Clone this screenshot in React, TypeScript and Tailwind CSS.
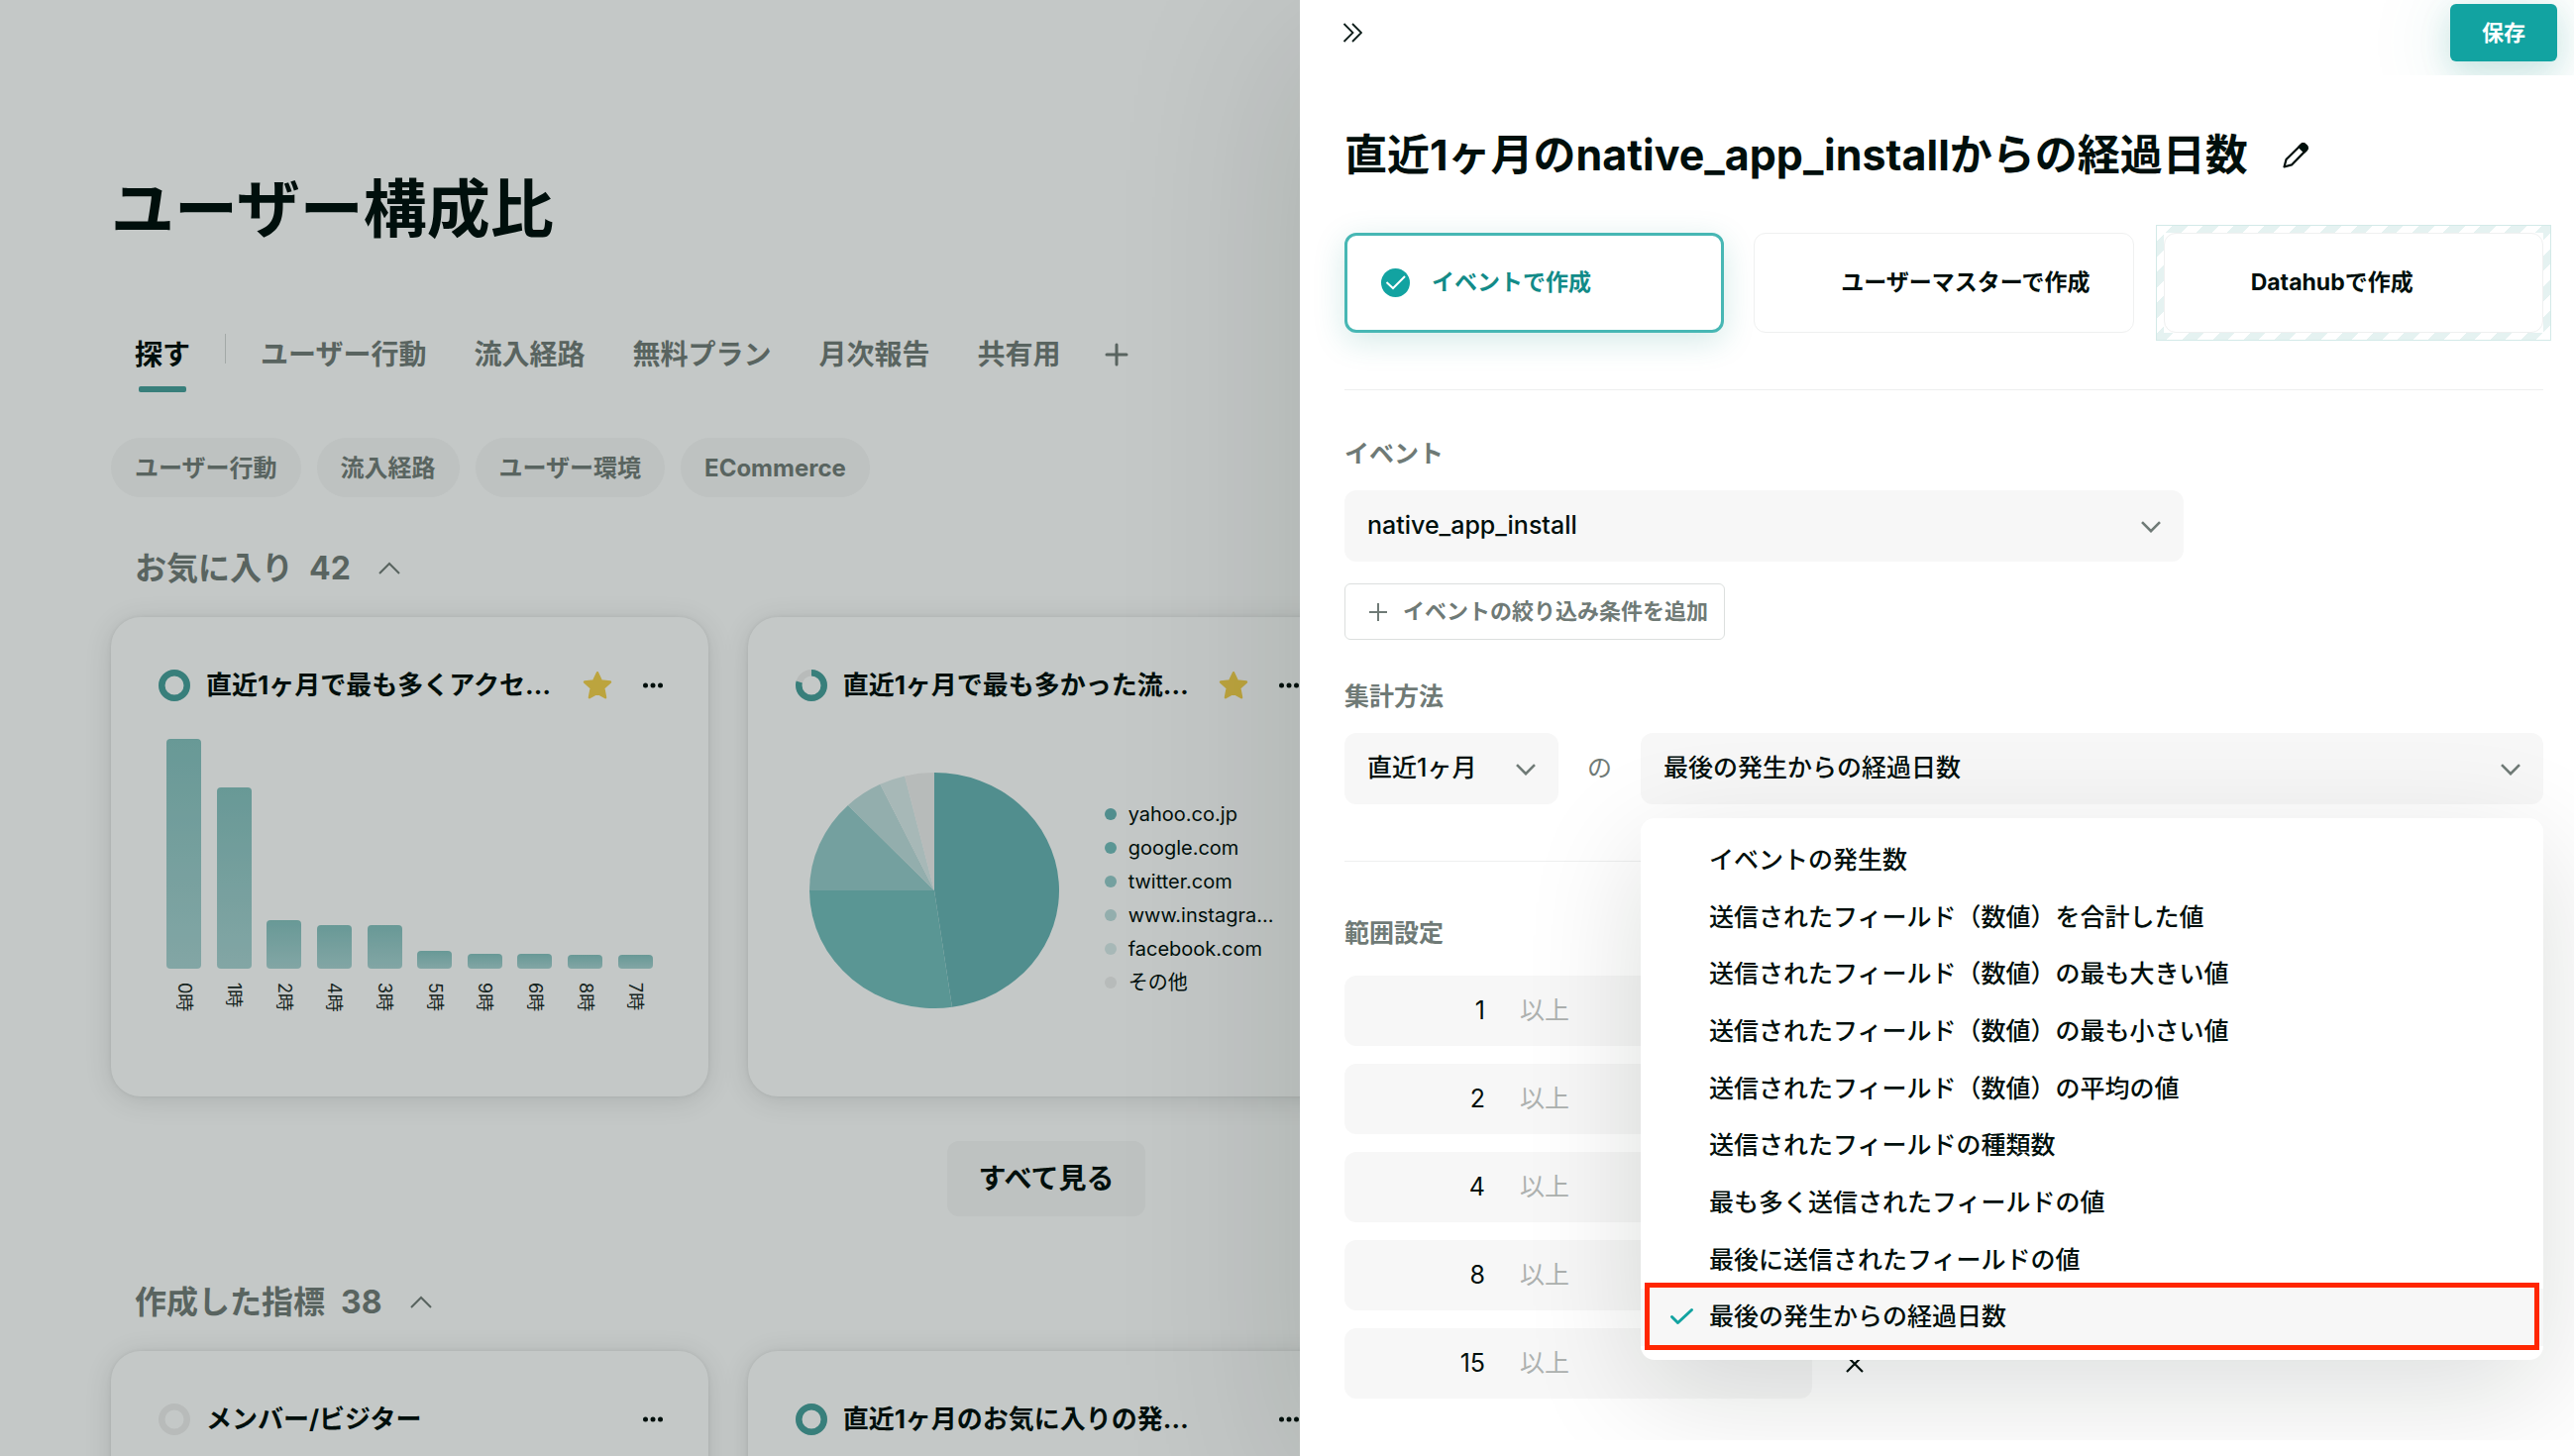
import { useState } from "react";
import type { ReactNode } from "react";
import clsx from "clsx";

const TABS = ["ユーザー行動", "流入経路", "無料プラン", "月次報告", "共有用"];
const CHIPS = ["ユーザー行動", "流入経路", "ユーザー環境", "ECommerce"];

const HOURS = [
  { label: "0時", height: 232 },
  { label: "1時", height: 183 },
  { label: "2時", height: 49 },
  { label: "4時", height: 44 },
  { label: "3時", height: 44 },
  { label: "5時", height: 18 },
  { label: "9時", height: 15 },
  { label: "6時", height: 15 },
  { label: "8時", height: 14 },
  { label: "7時", height: 14 },
];

const SOURCES = [
  { label: "yahoo.co.jp", to: 171.8, color: "#6ab4b5" },
  { label: "google.com", to: 270, color: "#76bebd" },
  { label: "twitter.com", to: 316.3, color: "#98cccb" },
  { label: "www.instagra...", to: 334.3, color: "#c0dddd" },
  { label: "facebook.com", to: 346.3, color: "#daebeb" },
  { label: "その他", to: 360, color: "#efeeee" },
];

const METHODS = [
  "イベントの発生数",
  "送信されたフィールド（数値）を合計した値",
  "送信されたフィールド（数値）の最も大きい値",
  "送信されたフィールド（数値）の最も小さい値",
  "送信されたフィールド（数値）の平均の値",
  "送信されたフィールドの種類数",
  "最も多く送信されたフィールドの値",
  "最後に送信されたフィールドの値",
  "最後の発生からの経過日数",
];

const RANGES = ["1", "2", "4", "8", "15"];

function ChevronDown({ className }: { className?: string }) {
  return (
    <svg viewBox="0 0 20 12" className={clsx("h-3 w-5", className)} fill="none" stroke="#6f7a76" strokeWidth="2.6">
      <path d="M1 1.2 10 10.2 19 1.2" />
    </svg>
  );
}

function Ring({ ratio }: { ratio: number }) {
  const length = 2 * Math.PI * 12.75;
  return (
    <svg viewBox="0 0 32 32" className="size-8 shrink-0 -rotate-90" fill="none" strokeWidth="6.5">
      <circle cx="16" cy="16" r="12.75" stroke="#f0efef" />
      {ratio > 0 && (
        <circle
          cx="16"
          cy="16"
          r="12.75"
          stroke="#4aa09d"
          strokeDasharray={`${length * ratio} ${length}`}
        />
      )}
    </svg>
  );
}

function SectionHeading({ title, count }: { title: string; count: number }) {
  return (
    <h2 className="flex h-12 items-center pl-6 text-[32px] font-bold text-[#747d79]">
      {title}
      <span className="ml-4">{count}</span>
      <button type="button" aria-label={`${title}を閉じる`} className="ml-7">
        <svg viewBox="0 0 22 14" className="h-3.5 w-[22px]" fill="none" stroke="currentColor" strokeWidth="2">
          <path d="M1 12 11 2 21 12" />
        </svg>
      </button>
    </h2>
  );
}

type CardProps = {
  title: string;
  ratio: number;
  starred?: boolean;
  children?: ReactNode;
};

function Card({ title, ratio, starred, children }: CardProps) {
  return (
    <article className="h-[484px] rounded-[30px] bg-white shadow-[0_4px_28px_rgba(0,20,16,0.12),0_0_4px_rgba(0,20,16,0.08)]">
      <header className="flex items-center pt-[53px] pr-11 pl-12">
        <Ring ratio={ratio} />
        <h3 className="ml-4 flex-1 truncate text-[26px] leading-8 font-bold">{title}</h3>
        {starred && (
          <button type="button" aria-label="お気に入りから外す" className="mr-7">
            <svg viewBox="0 0 32 32" className="size-8" fill="#f5d14d" stroke="#f5d14d" strokeWidth="2.4" strokeLinejoin="round">
              <path d="M16 3.2 19.9 11.4 29 12.5 22.3 18.7 24.1 28.2 16 23.8 7.9 28.2 9.7 18.7 3 12.5 12.1 11.4Z" />
            </svg>
          </button>
        )}
        <button type="button" aria-label="メニュー">
          <svg viewBox="0 0 24 24" className="size-6" fill="currentColor">
            <circle cx="4.5" cy="12" r="2.5" />
            <circle cx="12" cy="12" r="2.5" />
            <circle cx="19.5" cy="12" r="2.5" />
          </svg>
        </button>
      </header>
      {children}
    </article>
  );
}

function HoursChart() {
  return (
    <div className="mt-[38px] flex items-end justify-between px-14">
      {HOURS.map((hour) => (
        <div key={hour.label} className="flex w-[35px] flex-col items-center">
          <div
            className="w-full rounded-sm bg-linear-to-b from-[#88c2c0] to-[#aad3d3]"
            style={{ height: hour.height }}
          />
          <div className="mt-3.5 flex h-8 justify-center">
            <span className="text-lg leading-5 text-[#1d2b28] [text-orientation:sideways] [writing-mode:vertical-rl]">
              {hour.label}
            </span>
          </div>
        </div>
      ))}
    </div>
  );
}

function point(angle: number) {
  const rad = (angle * Math.PI) / 180;
  return `${126 + 126 * Math.sin(rad)} ${119 - 119 * Math.cos(rad)}`;
}

function SourcesChart() {
  return (
    <div className="mt-[72px] flex items-center pl-[62px]">
      <svg viewBox="0 0 252 238" className="h-[238px] w-[252px] shrink-0">
        {SOURCES.map((source, i) => {
          const from = i === 0 ? 0 : SOURCES[i - 1].to;
          return (
            <path
              key={source.label}
              d={`M126 119 L${point(from)} A126 119 0 0 1 ${point(source.to)} Z`}
              fill={source.color}
            />
          );
        })}
      </svg>
      <ul className="ml-[46px] flex flex-col gap-2.5 pt-4">
        {SOURCES.map((source) => (
          <li key={source.label} className="flex h-6 items-center gap-3">
            <svg viewBox="0 0 12 12" className="size-3">
              <circle cx="6" cy="6" r="6" fill={source.color} />
            </svg>
            <span className="text-xl leading-6">{source.label}</span>
          </li>
        ))}
      </ul>
    </div>
  );
}

function Dashboard() {
  return (
    <main className="pt-[171px] pr-[598px] pl-28">
      <h1 className="text-[64px] leading-20 font-bold">ユーザー構成比</h1>

      <nav className="mt-[87px] flex h-10 items-center pl-6 text-[28px] font-bold text-[#747d79]">
        <button type="button" className="relative text-[#000f0c]">
          探す
          <span className="absolute -bottom-[17px] left-1 h-1.5 w-12 rounded-xs bg-[#4aa09d]" />
        </button>
        <span className="mx-[35px] -mt-3 h-[30px] w-px bg-[#d5d7d6]" />
        <div className="flex items-center gap-12">
          {TABS.map((tab) => (
            <button key={tab} type="button">
              {tab}
            </button>
          ))}
        </div>
        <button type="button" aria-label="タブを追加" className="ml-11">
          <svg viewBox="0 0 24 24" className="size-6" fill="none" stroke="currentColor" strokeWidth="3" strokeLinecap="round">
            <path d="M12 2v20M2 12h20" />
          </svg>
        </button>
      </nav>

      <div className="mt-16 mb-12 flex gap-4">
        {CHIPS.map((chip) => (
          <button
            key={chip}
            type="button"
            className="h-15 rounded-full bg-[#f7f7f7] px-6 pt-0.5 text-2xl font-bold text-[#747d79]"
          >
            {chip}
          </button>
        ))}
      </div>

      <SectionHeading title="お気に入り" count={42} />
      <div className="mt-[25px] grid grid-cols-3 gap-10">
        <Card title="直近1ヶ月で最も多くアクセ…" ratio={1} starred>
          <HoursChart />
        </Card>
        <Card title="直近1ヶ月で最も多かった流…" ratio={0.79} starred>
          <SourcesChart />
        </Card>
      </div>
      <div className="mt-[45px] mb-[63px] flex justify-center">
        <button type="button" className="h-[76px] w-[200px] rounded-xl bg-[#f7f7f7] text-[28px] font-bold">
          すべて見る
        </button>
      </div>

      <SectionHeading title="作成した指標" count={38} />
      <div className="mt-[25px] grid grid-cols-3 gap-10">
        <Card title="メンバー/ビジター" ratio={0} />
        <Card title="直近1ヶ月のお気に入りの発…" ratio={1} />
      </div>
    </main>
  );
}

type SourceOptionProps = {
  label: string;
  checked: boolean;
  onSelect: () => void;
};

function SourceOption({ label, checked, onSelect }: SourceOptionProps) {
  return (
    <label
      className={clsx(
        "relative flex h-[101px] items-center rounded-xl bg-white text-[23px] font-bold",
        checked
          ? "border-3 border-[#47b7b4] pl-[34px] text-[#128b88] shadow-[0_8px_32px_rgba(16,140,130,0.18)]"
          : "border border-[#eff0f0] pl-9",
      )}
    >
      <input type="radio" name="source" className="sr-only" checked={checked} onChange={onSelect} />
      <svg viewBox="0 0 29 29" className={clsx("mr-[22px] size-[29px]", !checked && "invisible")} fill="none">
        <circle cx="14.5" cy="14.5" r="14.5" fill="#12a3a1" />
        <path d="M5.5 14 12 20 24 8" stroke="#fff" strokeWidth="2" />
      </svg>
      {label}
    </label>
  );
}

type SelectBoxProps = {
  id: string;
  options: string[];
  defaultValue: string;
  className?: string;
};

function SelectBox({ id, options, defaultValue, className }: SelectBoxProps) {
  return (
    <div className={clsx("relative", className)}>
      <select
        id={id}
        aria-label={id}
        defaultValue={defaultValue}
        className="h-[72px] w-full appearance-none rounded-xl bg-[#f7f7f7] pr-14 pl-[23px] text-[25px] font-medium outline-none"
      >
        {options.map((option) => (
          <option key={option}>{option}</option>
        ))}
      </select>
      <ChevronDown className="pointer-events-none absolute top-[31px] right-[23px]" />
    </div>
  );
}

function MethodMenu() {
  const [selected, setSelected] = useState(METHODS[8]);

  return (
    <ul
      role="listbox"
      aria-label="集計方法の候補"
      className="absolute top-[86px] right-0 left-0 z-10 grid h-[547px] auto-rows-fr rounded-[14px] bg-white py-3.5 shadow-[0_32px_120px_rgba(0,20,16,0.14)]"
    >
      {METHODS.map((method) => (
        <li
          key={method}
          role="option"
          aria-selected={method === selected}
          onClick={() => setSelected(method)}
          className={clsx(
            "relative flex items-center pl-7 text-[25px] font-medium",
            method === selected && "bg-[#f7f7f7]",
          )}
        >
          <svg
            viewBox="0 0 26 20"
            className={clsx("mr-[15px] h-5 w-[26px]", method !== selected && "invisible")}
            fill="none"
            stroke="#12a3a1"
            strokeWidth="3"
            strokeLinecap="round"
            strokeLinejoin="round"
          >
            <path d="M3.500 9.500 9.500 15.500 23.500 2.500" />
          </svg>
          {method}
          {method === selected && (
            <span className="absolute inset-x-1 -top-1.5 -bottom-1 border-5 border-[#ff2600]" />
          )}
        </li>
      ))}
    </ul>
  );
}

function Drawer() {
  const [source, setSource] = useState("event");

  return (
    <aside className="absolute inset-y-0 right-0 flex w-[1286px] flex-col bg-white pb-4 shadow-[0_40px_180px_rgba(0,20,16,0.14)]">
      <header className="flex h-[76px] shrink-0 items-start justify-between overflow-hidden pt-1 pr-[17px] pl-[43px]">
        <button type="button" aria-label="閉じる" className="flex h-[58px] items-center">
          <svg viewBox="0 0 20 20" className="size-5" fill="none" stroke="#0d1d1a" strokeWidth="1.8">
            <path d="M1.5 1 10.5 10 1.5 19M10 1 19 10 10 19" />
          </svg>
        </button>
        <button
          type="button"
          className="h-[58px] w-[108px] rounded-md bg-[#12a3a1] text-[22px] font-bold text-white shadow-[0_10px_90px_rgba(16,140,130,0.16),0_10px_30px_rgba(16,140,130,0.18)]"
        >
          保存
        </button>
      </header>

      <div className="flex-1 overflow-hidden pt-[52px] pr-[31px] pl-[45px]">
        <div className="flex h-[57px] items-center">
          <h2 className="text-[43px] font-bold">直近1ヶ月のnative_app_installからの経過日数</h2>
          <button type="button" aria-label="名前を編集" className="ml-[34px]">
            <svg viewBox="0 0 28 28" className="size-7" fill="none" stroke="#000f0c" strokeWidth="2.2" strokeLinejoin="round">
              <path d="M2.5 25.5 4.5 18 19.5 3.2C20.8 2 22.6 2.1 23.7 3.2L24.9 4.4C26 5.5 26 7.2 24.8 8.4L10 23.4Z" />
              <path d="M17.5 5.2 22.8 10.5 24.8 8.4C26 7.2 26 5.5 24.9 4.4L23.7 3.2C22.6 2.1 20.8 2 19.5 3.2Z" fill="#000f0c" />
            </svg>
          </button>
        </div>

        <div className="mt-[50px] grid grid-cols-3 gap-[30px]">
          <SourceOption label="イベントで作成" checked={source === "event"} onSelect={() => setSource("event")} />
          <SourceOption label="ユーザーマスターで作成" checked={source === "user"} onSelect={() => setSource("user")} />
          <div className="relative">
            <div className="absolute -inset-2 border border-[#d3eae8] bg-[repeating-linear-gradient(135deg,#fff_0_11px,#e5f2f1_11px_22px)]" />
            <div className="relative bg-white">
              <SourceOption label="Datahubで作成" checked={source === "datahub"} onSelect={() => setSource("datahub")} />
            </div>
          </div>
        </div>

        <hr className="mt-[57px] border-[#eeefef]" />

        <label htmlFor="event" className="mt-[46px] block text-[25px] leading-9 font-bold text-[#6f7a76]">
          イベント
        </label>
        <SelectBox
          id="event"
          options={["native_app_install"]}
          defaultValue="native_app_install"
          className="mt-[19px] w-[70%]"
        />
        <button
          type="button"
          className="mt-[22px] flex h-[57px] items-center rounded-md border border-[#dcdfde] pr-4 pl-6 text-[22px] font-bold text-[#6f7a76]"
        >
          <svg viewBox="0 0 18 18" className="mr-4 size-[18px]" fill="none" stroke="currentColor" strokeWidth="2">
            <path d="M9 0v18M0 9h18" />
          </svg>
          イベントの絞り込み条件を追加
        </button>

        <label htmlFor="period" className="mt-[39px] block text-[25px] leading-9 font-bold text-[#6f7a76]">
          集計方法
        </label>
        <div className="mt-[19px] flex items-center">
          <SelectBox id="period" options={["直近1ヶ月"]} defaultValue="直近1ヶ月" className="w-[216px]" />
          <span className="w-[83px] text-center text-[25px] text-[#6f7a76]">の</span>
          <div className="relative flex-1">
            <SelectBox id="method" options={METHODS} defaultValue={METHODS[8]} />
            <MethodMenu />
          </div>
        </div>

        <hr className="mt-[57px] border-[#eeefef]" />

        <h3 className="mt-[54px] text-[25px] leading-9 font-bold text-[#6f7a76]">範囲設定</h3>
        <ul className="mt-[25px] flex flex-col gap-[18px] text-[25px]">
          {RANGES.map((range) => (
            <li key={range} className="flex items-center">
              <label className="flex h-[71px] w-[472px] items-center rounded-xl bg-[#f7f7f7]">
                <input defaultValue={range} className="w-[142px] bg-transparent text-right outline-none" />
                <span className="ml-[35px] text-[#adb1af]">以上</span>
              </label>
              <button type="button" aria-label="削除" className="ml-[34px]">
                <svg viewBox="0 0 18 18" className="size-[18px]" fill="none" stroke="#000f0c" strokeWidth="2.2">
                  <path d="M1 1 17 17M17 1 1 17" />
                </svg>
              </button>
            </li>
          ))}
        </ul>
      </div>
    </aside>
  );
}

export default function App() {
  return (
    <div
      lang="ja"
      className="relative h-screen overflow-hidden bg-white font-[Inter,'Noto_Sans_CJK_JP',sans-serif] text-[#000f0c]"
    >
      <Dashboard />
      <div className="absolute inset-0 bg-[rgba(0,16,12,0.23)]" />
      <Drawer />
    </div>
  );
}
